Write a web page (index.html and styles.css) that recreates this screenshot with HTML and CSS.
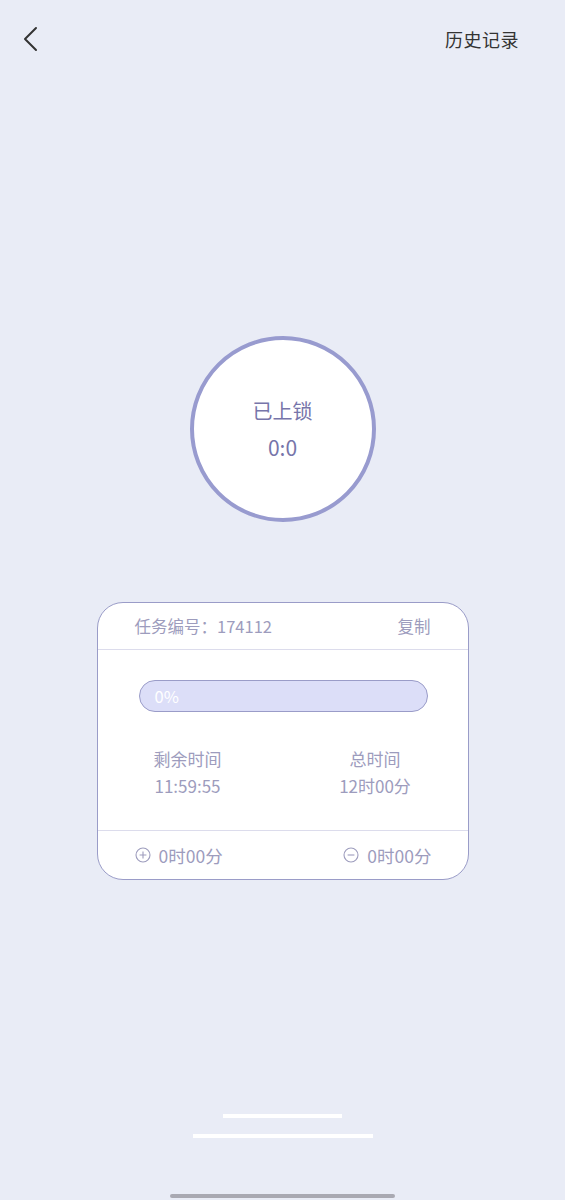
FILE: index.html
```html
<!DOCTYPE html>
<html lang="zh-CN">
<head>
    <meta charset="UTF-8">
    <meta name="viewport" content="width=device-width, initial-scale=1.0">
    <title>已上锁</title>
    <link rel="stylesheet" href="styles.css">
</head>
<body>
    <div class="page">
        <div class="top-bar">
            <div class="back">
                <svg width="16" height="26" viewBox="0 0 16 26">
                    <path d="M14 2 L3 13 L14 24" fill="none" stroke="#333" stroke-width="2" stroke-linecap="round" stroke-linejoin="round"/>
                </svg>
            </div>
            <div class="history">历史记录</div>
        </div>

        <div class="lock-circle">
            <div class="lock-title">已上锁</div>
            <div class="lock-time">0:0</div>
        </div>

        <div class="task-card">
            <div class="card-head">
                <span>任务编号：174112</span>
                <span>复制</span>
            </div>
            <div class="card-body">
                <div class="progress">
                    <span>0%</span>
                </div>
                <div class="times">
                    <div class="time-col">
                        <div>剩余时间</div>
                        <div>11:59:55</div>
                    </div>
                    <div class="time-col">
                        <div>总时间</div>
                        <div>12时00分</div>
                    </div>
                </div>
            </div>
            <div class="card-foot">
                <div class="adjust">
                    <svg width="16" height="16" viewBox="0 0 16 16">
                        <circle cx="8" cy="8" r="7" fill="none" stroke="#9d9cbd" stroke-width="1.1"/>
                        <path d="M4.6 8 H11.4 M8 4.6 V11.4" stroke="#9d9cbd" stroke-width="1.1"/>
                    </svg>
                    <span>0时00分</span>
                </div>
                <div class="adjust">
                    <svg width="16" height="16" viewBox="0 0 16 16">
                        <circle cx="8" cy="8" r="7" fill="none" stroke="#9d9cbd" stroke-width="1.1"/>
                        <path d="M4.6 8 H11.4" stroke="#9d9cbd" stroke-width="1.1"/>
                    </svg>
                    <span>0时00分</span>
                </div>
            </div>
        </div>

        <div class="bar-short"></div>
        <div class="bar-long"></div>
        <div class="home-indicator"></div>
    </div>
</body>
</html>
```

FILE: styles.css
```css
body {
    margin: 0;
    background-color: #e9ecf6;
    font-family: "Noto Sans CJK SC", "Noto Sans", sans-serif;
}

.page {
    height: 1200px;
    display: flex;
    flex-direction: column;
    align-items: center;
}

.top-bar {
    width: 100%;
    height: 78px;
    display: flex;
    justify-content: space-between;
    align-items: center;
    padding: 0 46px 0 22px;
    box-sizing: border-box;
}

.back {
    display: flex;
}

.history {
    font-size: 18px;
    color: #333;
    letter-spacing: 0.5px;
}

.lock-circle {
    margin-top: 258px;
    width: 186px;
    height: 186px;
    box-sizing: border-box;
    border: 4px solid #989bcf;
    border-radius: 50%;
    background-color: white;
    display: flex;
    flex-direction: column;
    justify-content: center;
    align-items: center;
    color: #7775aa;
    font-size: 20px;
    gap: 6px;
}

.lock-title {
    line-height: 30px;
}

.lock-time {
    line-height: 30px;
    font-size: 21px;
}

.task-card {
    margin-top: 80px;
    width: 372px;
    box-sizing: border-box;
    background-color: white;
    border: 1px solid #9a9cc8;
    border-radius: 26px;
    color: #9d9cbd;
    font-size: 16.5px;
}

.card-head {
    height: 46px;
    display: flex;
    justify-content: space-between;
    align-items: center;
    padding: 0 37px;
    border-bottom: 1px solid #dcdcec;
}

.card-body {
    padding: 30px 0 31px;
    border-bottom: 1px solid #dcdcec;
}

.progress {
    width: 289px;
    height: 32px;
    box-sizing: border-box;
    margin-left: 41px;
    border: 1px solid #9a9cc8;
    border-radius: 16px;
    background-color: #dcdef8;
    display: flex;
    align-items: center;
    padding-left: 15px;
    color: white;
}

.times {
    display: grid;
    grid-template-columns: 1fr 1fr;
    margin-top: 33px;
}

.time-col {
    text-align: center;
    line-height: 27px;
    font-size: 17px;
}

.time-col:first-child {
    margin-left: -5px;
}

.card-foot {
    height: 48px;
    display: flex;
    justify-content: space-between;
    align-items: center;
    padding: 0 36px 0 37px;
}

.adjust {
    display: flex;
    align-items: center;
    gap: 8px;
    font-size: 17.5px;
}

.bar-short {
    margin-top: 234px;
    width: 119px;
    height: 4px;
    background-color: white;
}

.bar-long {
    margin-top: 16px;
    width: 180px;
    height: 4px;
    background-color: white;
}

.home-indicator {
    margin-top: 56px;
    width: 225px;
    height: 4px;
    border-radius: 2px;
    background-color: #a9a9b2;
}
```
